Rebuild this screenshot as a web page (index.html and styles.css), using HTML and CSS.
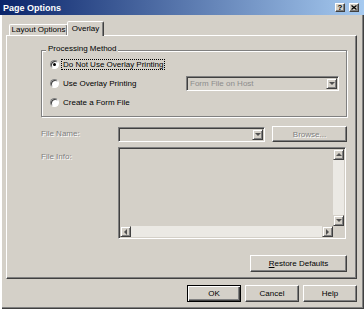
FILE: index.html
```html
<!DOCTYPE html>
<html lang="en">
<head>
    <meta charset="UTF-8">
    <title>Page Options</title>
    <link rel="stylesheet" href="styles.css">
</head>
<body>

<div class="dialog">
    <div class="titlebar">
        <span class="title">Page Options</span>
        <div class="caption-buttons">
            <button class="caption-btn">?</button>
            <button class="caption-btn">
                <svg width="6" height="5" viewBox="0 0 6 5"><path d="M0.5 0.5 L5.5 4.5 M5.5 0.5 L0.5 4.5" stroke="#000" stroke-width="1.3"/></svg>
            </button>
        </div>
    </div>

    <div class="client">
        <div class="tabs">
            <div class="tab">Layout Options</div>
            <div class="tab active">Overlay</div>
        </div>

        <div class="panel">
            <div class="group">
                <span class="group-title">Processing Method</span>
                <div class="choices">
                    <div class="choice-row">
                        <span class="choice"><span class="radio checked"></span><span class="choice-text focused">Do Not Use Overlay Printing</span></span>
                    </div>
                    <div class="choice-row">
                        <span class="choice fixed"><span class="radio"></span><span class="choice-text">Use Overlay Printing</span></span>
                        <div class="combo host-combo">
                            <span class="combo-value">Form File on Host</span>
                            <span class="drop-btn"><span class="arrow down"></span></span>
                        </div>
                    </div>
                    <div class="choice-row">
                        <span class="choice"><span class="radio"></span><span class="choice-text">Create a Form File</span></span>
                    </div>
                </div>
            </div>

            <div class="field-row">
                <span class="field-label">File Name:</span>
                <div class="combo name-combo">
                    <span class="combo-value"></span>
                    <span class="drop-btn"><span class="arrow down"></span></span>
                </div>
                <button class="btn browse" disabled>Browse...</button>
            </div>

            <div class="info-row">
                <span class="field-label">File Info:</span>
                <div class="memo">
                    <div class="memo-text"></div>
                    <div class="vscroll">
                        <span class="scroll-btn"><span class="arrow up"></span></span>
                        <span class="track"></span>
                        <span class="scroll-btn"><span class="arrow down"></span></span>
                    </div>
                    <div class="hscroll">
                        <span class="scroll-btn"><span class="arrow left"></span></span>
                        <span class="track"></span>
                        <span class="scroll-btn"><span class="arrow right"></span></span>
                    </div>
                    <div class="size-corner"></div>
                </div>
            </div>

            <div class="restore-row">
                <button class="btn restore"><u>R</u>estore Defaults</button>
            </div>
        </div>

        <div class="footer">
            <button class="btn default">OK</button>
            <button class="btn">Cancel</button>
            <button class="btn">Help</button>
        </div>
    </div>
</div>

</body>
</html>
```

FILE: styles.css
```css
body {
    margin: 0;
    font-family: "Liberation Sans", Arial, sans-serif;
    font-size: 8px;
    color: #000;
}
.dialog {
    width: 364px;
    height: 309px;
    display: flex;
    flex-direction: column;
    background: #d4d0c8;
    overflow: hidden;
}
.titlebar {
    flex: none;
    height: 15px;
    display: flex;
    align-items: center;
    justify-content: space-between;
    background: linear-gradient(to right, #0a246a, #a6caf0);
}
.title {
    padding-left: 3px;
    color: #fff;
    font-weight: bold;
    font-size: 9px;
}
.caption-buttons {
    display: flex;
    gap: 4px;
    margin-right: 5px;
}
.caption-btn {
    width: 10px;
    height: 9px;
    padding: 0;
    box-sizing: border-box;
    display: flex;
    align-items: center;
    justify-content: center;
    font: bold 8px "Liberation Sans", Arial, sans-serif;
    line-height: 7px;
    background: #d4d0c8;
    border: 1px solid;
    border-color: #fff #404040 #404040 #fff;
    box-shadow: inset -1px -1px 0 #808080;
}
.client {
    flex: 1;
    min-height: 0;
    display: flex;
    flex-direction: column;
    padding: 6px 7px 7px 6px;
    box-shadow: inset 2px 0 0 #fff, inset -1px -1px 0 #404040, inset -2px -2px 0 #808080;
}
.tabs {
    flex: none;
    display: flex;
    align-items: flex-end;
    height: 15px;
    margin-bottom: -1px;
}
.tab {
    box-sizing: border-box;
    width: 59px;
    height: 12px;
    margin-left: 3px;
    padding-top: 0;
    line-height: 10px;
    text-align: center;
    border: 1px solid;
    border-bottom: none;
    border-color: #fff #404040 transparent #fff;
    border-radius: 2px 2px 0 0;
    box-shadow: inset -1px 0 0 #808080;
}
.tab.active {
    position: relative;
    z-index: 1;
    width: 37px;
    height: 15px;
    margin-left: -1px;
    padding-top: 1px;
    line-height: 11px;
    background: #d4d0c8;
}
.panel {
    flex: 1;
    min-height: 0;
    border: 1px solid;
    border-color: #fff #404040 #404040 #fff;
    box-shadow: inset -1px -1px 0 #808080;
    padding: 14px 9px 0 34px;
}
.group {
    border: 1px solid #808080;
    box-shadow: inset 1px 1px 0 #fff, 1px 1px 0 #fff;
    padding: 0 0 5px 8px;
}
.group-title {
    display: block;
    width: fit-content;
    margin: -7px 0 0 -4px;
    padding: 0 2px;
    line-height: 10px;
    background: #d4d0c8;
}
.choices {
    padding-top: 1px;
    display: flex;
    flex-direction: column;
    gap: 1px;
}
.choice-row {
    height: 18px;
    display: flex;
    align-items: center;
}
.choice {
    display: flex;
    align-items: center;
}
.choice.fixed {
    width: 136px;
}
.radio {
    box-sizing: border-box;
    width: 9px;
    height: 9px;
    border-radius: 50%;
    border: 1px solid;
    border-color: #808080 #fff #fff #808080;
    background: #fff;
    box-shadow: inset 1px 1px 0 #404040;
    display: flex;
    align-items: center;
    justify-content: center;
}
.radio.checked::after {
    content: "";
    width: 3px;
    height: 3px;
    border-radius: 50%;
    background: #000;
}
.choice-text {
    margin-left: 2px;
    padding: 0 1px;
    line-height: 9px;
    border: 1px dotted transparent;
}
.choice-text.focused {
    border-color: #000;
}
.combo {
    box-sizing: border-box;
    display: flex;
    height: 15px;
    padding: 1px;
    border: 1px solid;
    border-color: #808080 #fff #fff #808080;
    box-shadow: inset 1px 1px 0 #404040, inset -1px -1px 0 #d4d0c8;
}
.host-combo {
    width: 153px;
}
.name-combo {
    width: 147px;
}
.combo-value {
    flex: 1;
    padding-left: 2px;
    line-height: 11px;
    color: #8c8c8c;
}
.drop-btn, .scroll-btn {
    box-sizing: border-box;
    width: 11px;
    height: 11px;
    display: flex;
    align-items: center;
    justify-content: center;
    background: #d4d0c8;
    border: 1px solid;
    border-color: #d4d0c8 #404040 #404040 #d4d0c8;
    box-shadow: inset 1px 1px 0 #fff, inset -1px -1px 0 #808080;
}
.arrow {
    width: 0;
    height: 0;
    border: 3px solid transparent;
}
.arrow.down {
    border-top-color: #505050;
    border-bottom-width: 0;
}
.arrow.up {
    border-bottom-color: #505050;
    border-top-width: 0;
}
.arrow.left {
    border-right-color: #505050;
    border-left-width: 0;
}
.arrow.right {
    border-left-color: #505050;
    border-right-width: 0;
}
.field-label {
    width: 77px;
    flex: none;
    line-height: 10px;
    color: #808080;
    text-shadow: 1px 1px 0 #fff;
}
.field-row {
    display: flex;
    align-items: center;
    height: 16px;
    margin-top: 9px;
}
.btn {
    box-sizing: border-box;
    height: 17px;
    padding: 0;
    font: 8px "Liberation Sans", Arial, sans-serif;
    color: #000;
    background: #d4d0c8;
    border: 1px solid;
    border-color: #fff #404040 #404040 #fff;
    box-shadow: inset -1px -1px 0 #808080;
}
.btn:disabled {
    color: #808080;
    text-shadow: 1px 1px 0 #fff;
}
.browse {
    width: 75px;
    height: 16px;
    margin-left: 7px;
}
.info-row {
    display: flex;
    margin-top: 5px;
}
.info-row .field-label {
    padding-top: 5px;
}
.memo {
    box-sizing: border-box;
    width: 228px;
    height: 92px;
    padding: 1px;
    border: 1px solid;
    border-color: #808080 #fff #fff #808080;
    box-shadow: inset 1px 1px 0 #404040, inset -1px -1px 0 #d4d0c8;
    display: grid;
    grid-template-columns: 1fr 11px;
    grid-template-rows: 1fr 11px;
}
.vscroll {
    display: flex;
    flex-direction: column;
}
.hscroll {
    display: flex;
}
.track {
    flex: 1;
    background: #ebe9e4;
}
.restore-row {
    display: flex;
    justify-content: flex-end;
    margin-top: 16px;
}
.restore {
    width: 97px;
}
.footer {
    flex: none;
    display: flex;
    justify-content: flex-end;
    gap: 4px;
    margin-top: 6px;
}
.footer .btn {
    width: 54px;
}
.btn.default {
    border-color: #000;
    box-shadow: inset 1px 1px 0 #fff, inset -1px -1px 0 #404040, inset -2px -2px 0 #808080;
}
```
